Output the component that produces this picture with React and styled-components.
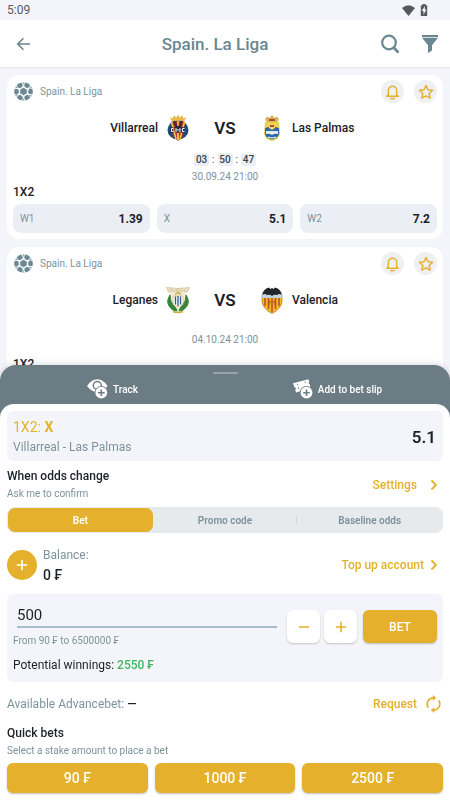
import React, { useState } from 'react';
import styled, { createGlobalStyle, css } from 'styled-components';

const colors = {
  page: '#f4f5fa',
  text: '#1c2127',
  muted: '#7d939c',
  slate: '#6b8791',
  gold: '#e5b02c',
  chip: '#ebeef4',
  sheet: '#6c7c84',
  green: '#3fb562',
};

const GlobalStyle = createGlobalStyle`
  * {
    box-sizing: border-box;
  }
  body {
    margin: 0;
    background: ${colors.page};
    color: ${colors.text};
    font-family: Roboto, "Liberation Sans", sans-serif;
    overflow: hidden;
  }
  button, input {
    font-family: inherit;
  }
  button {
    border: none;
    padding: 0;
    background: none;
    cursor: pointer;
  }
  svg {
    display: block;
    flex-shrink: 0;
  }
`;

const Screen = styled.div`
  height: 100vh;
  overflow: hidden;
`;

const StatusBar = styled.div`
  display: flex;
  align-items: center;
  justify-content: space-between;
  height: 20px;
  padding: 0 22px 0 7px;
  font-size: 12px;
  color: #55595e;
`;

const StatusIcons = styled.div`
  display: flex;
  align-items: center;
  gap: 5px;
`;

const Header = styled.header`
  display: grid;
  grid-template-columns: 48px 1fr 72px;
  align-items: center;
  height: 48px;
  padding: 0 10px 0 14px;
  background: #fff;
  border-bottom: 1px solid #e6e9ed;
`;

const HeaderTitle = styled.h1`
  margin: 0;
  font-size: 17px;
  font-weight: 500;
  line-height: 20px;
  text-align: center;
  color: ${colors.slate};
`;

const HeaderActions = styled.div`
  display: flex;
  align-items: center;
  justify-content: flex-end;
  gap: 20px;
`;

const IconButton = styled.button`
  display: flex;
  align-items: center;
  color: ${colors.slate};
`;

const MatchList = styled.main`
  display: flex;
  flex-direction: column;
  gap: 8px;
  padding: 7px;
`;

const Card = styled.article`
  padding: 5px 6px 6px;
  border-radius: 12px;
  background: #fff;
`;

const CardHead = styled.div`
  display: flex;
  align-items: center;
  gap: 7px;
  height: 23px;
  padding-left: 1px;
`;

const League = styled.span`
  flex: 1;
  font-size: 10px;
  color: ${colors.muted};
`;

const RoundButton = styled.button`
  display: flex;
  align-items: center;
  justify-content: center;
  width: 23px;
  height: 23px;
  margin-left: 3px;
  border-radius: 50%;
  background: #eff0f3;
`;

const Teams = styled.div`
  display: grid;
  grid-template-columns: 1fr 70px 1fr;
  align-items: center;
  height: 32px;
  margin-top: 9px;
`;

const Team = styled.div`
  display: flex;
  align-items: center;
  flex-direction: ${props => (props.$away ? 'row' : 'row-reverse')};
  gap: 8px;
  font-size: 12px;
  font-weight: 500;
`;

const Versus = styled.div`
  text-align: center;
  font-size: 17px;
  font-weight: 600;
`;

const Schedule = styled.div`
  display: flex;
  flex-direction: column;
  align-items: center;
  justify-content: center;
  gap: 5px;
  height: 32px;
  margin-top: 8px;
`;

const Timer = styled.div`
  display: flex;
  align-items: center;
  gap: 3px;
  font-size: 10px;
  line-height: 13px;
  color: #3b454e;
`;

const TimerCell = styled.span`
  width: 15px;
  border-radius: 3px;
  background: ${colors.chip};
  text-align: center;
  font-weight: 500;
`;

const DateText = styled.time`
  font-size: 10px;
  line-height: 12px;
  color: ${colors.muted};
`;

const MarketTitle = styled.h2`
  margin: 0;
  font-size: 12px;
  font-weight: 500;
  line-height: 16px;
`;

const Odds = styled.div`
  display: grid;
  grid-template-columns: repeat(3, 1fr);
  gap: 7px;
  margin-top: 4px;
`;

const OddButton = styled.button`
  display: flex;
  align-items: center;
  justify-content: space-between;
  height: 29px;
  padding: 0 7px;
  border-radius: 8px;
  background: ${colors.chip};
  color: ${colors.muted};
  font-size: 10px;

  strong {
    font-size: 12px;
    font-weight: 700;
    color: ${colors.text};
  }
`;

const Sheet = styled.section`
  position: fixed;
  left: 0;
  right: 0;
  bottom: 0;
  border-radius: 16px 16px 0 0;
  background: ${colors.sheet};
  box-shadow: 0 -1px 6px rgba(60, 70, 80, 0.2);
`;

const Handle = styled.div`
  width: 25px;
  height: 2px;
  margin: 0 auto;
  border-radius: 1px;
  background: #97a3a9;
`;

const SheetTop = styled.div`
  height: 39px;
  padding-top: 7px;
`;

const SheetActions = styled.div`
  display: grid;
  grid-template-columns: 1fr 1fr;
  height: 30px;
`;

const SheetAction = styled.button`
  display: flex;
  align-items: center;
  justify-content: center;
  gap: 5px;
  color: #fff;
  font-size: 10px;
  font-weight: 500;
`;

const Panel = styled.div`
  padding: 7px;
  border-radius: 14px 14px 0 0;
  background: #fff;
`;

const Row = styled.div`
  display: flex;
  align-items: center;
  justify-content: space-between;
`;

const Selection = styled(Row)`
  height: 50px;
  padding: 2px 7px 0 6px;
  border-radius: 6px;
  background: ${colors.page};
`;

const Pick = styled.div`
  font-size: 14px;
  line-height: 20px;
  color: ${colors.gold};

  b {
    font-weight: 700;
  }
`;

const MatchName = styled.div`
  font-size: 12px;
  line-height: 20px;
  color: ${colors.muted};
`;

const PickOdd = styled.div`
  font-size: 17px;
  font-weight: 600;
`;

const Label = styled.div`
  font-size: 12px;
  font-weight: 500;
  line-height: 17px;
`;

const Hint = styled.div`
  font-size: 10px;
  line-height: 17px;
  color: ${colors.muted};
`;

const LinkButton = styled.button`
  display: flex;
  align-items: center;
  gap: ${props => (props.$wide ? '13px' : '6px')};
  padding-right: 5px;
  color: ${colors.gold};
  font-size: 12px;
  font-weight: 500;
`;

const OddsChange = styled(Row)`
  height: 34px;
  margin-top: 7px;
`;

const Tabs = styled.div`
  display: grid;
  grid-template-columns: repeat(3, 1fr);
  height: 26px;
  margin-top: 5px;
  padding: 1px;
  border-radius: 8px;
  background: #e6eaed;
`;

const Tab = styled.button`
  border-radius: 7px;
  color: ${colors.muted};
  font-size: 10px;
  font-weight: 600;

  ${props =>
    props.$active &&
    css`
      background: ${colors.gold};
      color: #fff;
    `}
`;

const TabWithDivider = styled(Tab)`
  position: relative;

  &::after {
    content: '';
    position: absolute;
    top: 8px;
    right: 0;
    width: 1px;
    height: 8px;
    background: #d0d8dd;
  }
`;

const BalanceRow = styled(Row)`
  height: 40px;
  margin-top: 12px;
`;

const BalanceInfo = styled.div`
  display: flex;
  align-items: center;
  gap: 6px;
`;

const AddFunds = styled.button`
  display: flex;
  align-items: center;
  justify-content: center;
  width: 30px;
  height: 30px;
  border-radius: 50%;
  background: ${colors.gold};
`;

const BalanceLabel = styled.div`
  font-size: 12px;
  line-height: 19px;
  color: ${colors.muted};
`;

const BalanceValue = styled.div`
  font-size: 14px;
  font-weight: 500;
  line-height: 20px;
`;

const StakeBox = styled.div`
  margin-top: 9px;
  padding: 10px 6px 8px;
  border-radius: 6px;
  background: ${colors.page};
`;

const StakeRow = styled.div`
  display: flex;
  gap: 4px;
  height: 40px;
`;

const StakeField = styled.div`
  flex: 1;
  min-width: 0;
  margin-right: 6px;
`;

const StakeInput = styled.input`
  display: block;
  width: calc(100% - 4px);
  height: 24px;
  margin-left: 4px;
  padding: 0;
  border: none;
  border-bottom: 2px solid #a9bccb;
  border-radius: 0;
  outline: none;
  background: transparent;
  color: ${colors.text};
  font-size: 15px;
`;

const StakeHint = styled.label`
  display: block;
  margin-top: 6px;
  font-size: 10px;
  line-height: 14px;
  color: ${colors.muted};
`;

const StepButton = styled.button`
  display: flex;
  align-items: center;
  justify-content: center;
  width: 33px;
  height: 33px;
  margin-top: 6px;
  border-radius: 6px;
  background: #fff;
  box-shadow: 0 1px 2px rgba(0, 0, 0, 0.2);
`;

const BetButton = styled.button`
  width: 74px;
  height: 33px;
  margin: 6px 0 0 2px;
  border-radius: 6px;
  background: ${colors.gold};
  box-shadow: 0 1px 2px rgba(0, 0, 0, 0.25);
  color: #fff;
  font-size: 12px;
  font-weight: 500;
`;

const Winnings = styled.div`
  margin-top: 12px;
  font-size: 12px;
  line-height: 18px;

  span {
    font-weight: 500;
    color: ${colors.green};
  }
`;

const AdvanceRow = styled(Row)`
  height: 24px;
  margin-top: 10px;
  font-size: 12px;
  color: ${colors.muted};

  b {
    color: ${colors.text};
    font-weight: 500;
  }
`;

const RequestButton = styled(LinkButton)`
  gap: 8px;
  padding-right: 1px;
`;

const QuickBets = styled.div`
  margin-top: 9px;
`;

const QuickGrid = styled.div`
  display: grid;
  grid-template-columns: repeat(3, 1fr);
  gap: 7px;
  margin-top: 4px;
`;

const QuickButton = styled.button`
  height: 30px;
  border-radius: 6px;
  background: ${colors.gold};
  box-shadow: 0 1px 2px rgba(0, 0, 0, 0.25);
  color: #fff;
  font-size: 14px;
  font-weight: 500;
`;

const BallIcon = () => (
  <svg width="19" height="19" viewBox="0 0 38 38" fill={colors.slate}>
    <path d="M19 12l6.200 3.500v7L19 26l-6.200-3.500v-7z" stroke={colors.slate} strokeWidth="1" />
    {[30, 90, 150, 210, 270, 330].map(angle => (
      <g key={angle} transform={`rotate(${angle} 19 19)`}>
        <path d="M13.500 1.300a18.500 18.500 0 0 1 11 0l-.5 5.700-2 2.500h-6l-2-2.500z" />
        <path d="M26.500 2.200a18.500 18.500 0 0 1 3.500 2.200l-3 4-1.500-1z" opacity="0.7" />
      </g>
    ))}
  </svg>
);

const BellIcon = () => (
  <svg width="15" height="16" viewBox="0 0 15 16" fill="none" stroke={colors.gold} strokeWidth="1.400" strokeLinecap="round" strokeLinejoin="round">
    <path d="M3.300 11V6.500a4.200 4.200 0 0 1 8.400 0V11l1.500 1.300H1.800z" />
    <path d="M5.800 14.400q1.700 1 3.400 0" />
  </svg>
);

const StarIcon = () => (
  <svg width="16" height="16" viewBox="0 0 16 16" fill="none" stroke={colors.gold} strokeWidth="1.500" strokeLinejoin="round">
    <path d="M8 1.500l2 4.200 4.600.6-3.400 3.200.9 4.700L8 11.900l-4.100 2.300.9-4.700L1.400 6.300 6 5.700z" />
  </svg>
);

const ChevronIcon = () => (
  <svg width="8" height="12" viewBox="0 0 8 12" fill="none" stroke={colors.gold} strokeWidth="1.800">
    <path d="M1.500 1.500L6 6l-4.500 4.500" />
  </svg>
);

const PlusIcon = ({ color = colors.gold, size = 12 }) => (
  <svg width={size} height={size} viewBox="0 0 12 12" stroke={color} strokeWidth="1.600">
    <path d="M6 .8v10.400M.8 6h10.400" />
  </svg>
);

const MinusIcon = () => (
  <svg width="12" height="12" viewBox="0 0 12 12" stroke={colors.gold} strokeWidth="1.600">
    <path d="M1 6h10" />
  </svg>
);

const RefreshIcon = () => (
  <svg width="17" height="18" viewBox="0 0 17 18" fill="none" stroke={colors.gold} strokeWidth="1.600">
    <path d="M3.200 12.600A6.300 6.300 0 0 1 8.500 2.900" />
    <path d="M13.800 5.400A6.300 6.300 0 0 1 8.500 15.100" />
    <path d="M7.800.1l3.400 2.800-3.400 2.800zM9.200 12.300l-3.400 2.800 3.400 2.800z" fill={colors.gold} stroke="none" />
  </svg>
);

const TrackIcon = () => (
  <svg width="21" height="20" viewBox="0 0 21 20">
    <path d="M0 7Q4.500.300 10.300.300T20.600 7Q16 13 10.300 13T0 7z" fill="#fff" />
    <circle cx="10.300" cy="6.500" r="4" fill="none" stroke={colors.sheet} strokeWidth="1.500" />
    <circle cx="14.300" cy="13.700" r="6.800" fill={colors.sheet} />
    <circle cx="14.300" cy="13.700" r="5.900" fill="#fff" />
    <path d="M14.300 10.400V17M11 13.700h6.600" stroke={colors.sheet} strokeWidth="1.600" />
  </svg>
);

const SlipIcon = () => (
  <svg width="20" height="20" viewBox="0 0 20 20">
    <path d="M0 4.200L15.500.300l.8 3-1.200 1 1.500.8.9 4.200L3 13.500l-.8-3 1.400-1.200-2-.8z" fill="#fff" />
    <path d="M4.500 4.800l.4 1.500M5.500 8.500l.4 1.500M12 2.800l.3 1.200" stroke={colors.sheet} strokeWidth="1" />
    <circle cx="13.500" cy="13.700" r="6.800" fill={colors.sheet} />
    <circle cx="13.500" cy="13.700" r="5.900" fill="#fff" />
    <path d="M13.500 10.400V17M10.200 13.700h6.600" stroke={colors.sheet} strokeWidth="1.600" />
  </svg>
);

const VillarrealCrest = () => (
  <svg width="24" height="28" viewBox="0 0 24 28">
    <path d="M6 7L3.500 3.500l3 .8L8 1.500l2.300 2L12 .8l1.700 2.700 2.300-2 1.500 2.800 3-.8L18 7z" fill="#e9b949" />
    <ellipse cx="12" cy="16" rx="10.500" ry="9.500" fill="#234a7c" />
    <path d="M5 7.500h14L17 22l-5 5-5-5z" fill="#b5342c" />
    <path d="M5.500 8l4.500 17M18.500 8L14 25M12 6v6" stroke="#f3c84b" strokeWidth="1.500" />
    <path d="M8 7l4 8 4-8" fill="none" stroke="#1d2842" strokeWidth="1.600" />
    <path d="M7.500 14.500h-2v3h2M10 18v-3.500l2 2 2-2V18M18.500 14.500h-2v3h2" fill="none" stroke="#1d2842" strokeWidth="2.400" />
    <path d="M7.500 14.500h-2v3h2M10 18v-3.500l2 2 2-2V18M18.500 14.500h-2v3h2" fill="none" stroke="#fff" strokeWidth="1" />
    <path d="M12 19v7" stroke="#e9b949" strokeWidth="2" />
  </svg>
);

const LasPalmasCrest = () => (
  <svg width="24" height="28" viewBox="0 0 24 28">
    <path d="M7 8Q3.500 5 7 3l3 .5L12 .8l2 2.700 3-.5q3.500 2 0 5z" fill="#d6b354" />
    <path d="M9 5h6v2H9z" fill="#a84a36" />
    <path d="M5 8h14l1 12q-2 6-8 7-6-1-8-7z" fill="#ecd24b" />
    <path d="M5 14q7-3 14 0v6q-1 4-7 5.500Q6 24 5 20z" fill="#2c68a8" />
    <path d="M9 14v-4h6v4l-3 2z" fill="#f0d65a" />
    <path d="M10 11h4v2h-4z" fill="#b44839" />
    <path d="M6 17h12v3q-3-1-6 1-3-2-6-1z" fill="#e4ecf4" />
    <path d="M8 23q4 2 8 0" fill="none" stroke="#fff" strokeWidth="1" />
  </svg>
);

const LeganesCrest = () => (
  <svg width="24" height="28" viewBox="0 0 24 28">
    <path d="M.7 1.500q11.300 2 22.600 0L21.500 6h-19z" fill="#ebe0c4" stroke="#ceb98b" strokeWidth=".7" />
    <path d="M4 4h16" stroke="#c9b58c" strokeWidth="1" strokeDasharray="1 1" />
    <path d="M3.500 6.500h17L22 17q-1 8-10 10Q3 25 2 17z" fill="#f4ecd8" />
    <path d="M4 9q-4 6-1 11 3 5 8 5-1-4-4-6-3-4-3-10zM20 9q4 6 1 11-3 5-8 5 1-4 4-6 3-4 3-10z" fill="#36853b" stroke="#36853b" />
    <path d="M7 10h10v7q-1 3-5 4-4-1-5-4z" fill="#fff" stroke="#d4ba68" strokeWidth=".7" />
    <path d="M9.500 10.500v8M12 10v10M14.500 10.500v8" stroke="#285a92" strokeWidth="1.300" />
    <path d="M9 8.500l3-2 3 2M7 25.500q5 2 10 0" fill="none" stroke="#c9a943" strokeWidth="1.500" />
  </svg>
);

const ValenciaCrest = () => (
  <svg width="24" height="28" viewBox="0 0 24 28">
    <path d="M2 9h20v7q-1 7-10 11.500Q3 23 2 16z" fill="#f0b929" stroke="#9e6525" strokeWidth=".6" />
    <path d="M5 11v9M8.500 11v12M12 11v15M15.500 11v12M19 11v9" stroke="#c14b25" strokeWidth="1.500" />
    <path d="M2 8.500q3-2 10 0 7-2 10 0v3.500H2z" fill="#bfd2df" />
    <path d="M2 9Q3 3 9 1.500L10.500 3 12 2l1.500 1L15 1.500Q21 3 22 9q-3-2-5 0-3-1-5 1-2-2-5-1-2-2-5 0z" fill="#22262b" />
    <path d="M9.500 19v-4l2.500 2 2.500-2v4" fill="none" stroke="#b77a20" strokeWidth="1.300" />
  </svg>
);

const matches = [
  {
    home: 'Villarreal',
    away: 'Las Palmas',
    homeCrest: <VillarrealCrest />,
    awayCrest: <LasPalmasCrest />,
    timer: ['03', '50', '47'],
    date: '30.09.24 21:00',
    odds: [['W1', '1.39'], ['X', '5.1'], ['W2', '7.2']],
  },
  {
    home: 'Leganes',
    away: 'Valencia',
    homeCrest: <LeganesCrest />,
    awayCrest: <ValenciaCrest />,
    date: '04.10.24 21:00',
    odds: [],
  },
];

function MatchCard({ match }) {
  return (
    <Card>
      <CardHead>
        <BallIcon />
        <League>Spain. La Liga</League>
        <RoundButton aria-label="Notifications"><BellIcon /></RoundButton>
        <RoundButton aria-label="Favorite"><StarIcon /></RoundButton>
      </CardHead>
      <Teams>
        <Team>{match.homeCrest}{match.home}</Team>
        <Versus>VS</Versus>
        <Team $away>{match.awayCrest}{match.away}</Team>
      </Teams>
      <Schedule>
        {match.timer && (
          <Timer>
            <TimerCell>{match.timer[0]}</TimerCell>:
            <TimerCell>{match.timer[1]}</TimerCell>:
            <TimerCell>{match.timer[2]}</TimerCell>
          </Timer>
        )}
        <DateText>{match.date}</DateText>
      </Schedule>
      <MarketTitle>1X2</MarketTitle>
      <Odds>
        {match.odds.map(([name, value]) => (
          <OddButton key={name}>{name}<strong>{value}</strong></OddButton>
        ))}
      </Odds>
    </Card>
  );
}

function BetSheet() {
  const [tab, setTab] = useState('Bet');
  const [stake, setStake] = useState(500);

  return (
    <Sheet>
      <SheetTop>
        <Handle />
        <SheetActions>
          <SheetAction><TrackIcon />Track</SheetAction>
          <SheetAction><SlipIcon />Add to bet slip</SheetAction>
        </SheetActions>
      </SheetTop>
      <Panel>
        <Selection>
          <div>
            <Pick>1X2: <b>X</b></Pick>
            <MatchName>Villarreal - Las Palmas</MatchName>
          </div>
          <PickOdd>5.1</PickOdd>
        </Selection>
        <OddsChange>
          <div>
            <Label>When odds change</Label>
            <Hint>Ask me to confirm</Hint>
          </div>
          <LinkButton $wide>Settings<ChevronIcon /></LinkButton>
        </OddsChange>
        <Tabs>
          <Tab $active={tab === 'Bet'} onClick={() => setTab('Bet')}>Bet</Tab>
          <TabWithDivider $active={tab === 'Promo'} onClick={() => setTab('Promo')}>Promo code</TabWithDivider>
          <Tab $active={tab === 'Baseline'} onClick={() => setTab('Baseline')}>Baseline odds</Tab>
        </Tabs>
        <BalanceRow>
          <BalanceInfo>
            <AddFunds aria-label="Add funds"><PlusIcon color="#fff" /></AddFunds>
            <div>
              <BalanceLabel>Balance:</BalanceLabel>
              <BalanceValue>0 ₣</BalanceValue>
            </div>
          </BalanceInfo>
          <LinkButton>Top up account<ChevronIcon /></LinkButton>
        </BalanceRow>
        <StakeBox>
          <StakeRow>
            <StakeField>
              <StakeInput id="stake" inputMode="numeric" value={stake} onChange={e => setStake(Number(e.target.value) || 0)} />
              <StakeHint htmlFor="stake">From 90 ₣ to 6500000 ₣</StakeHint>
            </StakeField>
            <StepButton aria-label="Decrease stake" onClick={() => setStake(stake - 10)}><MinusIcon /></StepButton>
            <StepButton aria-label="Increase stake" onClick={() => setStake(stake + 10)}><PlusIcon /></StepButton>
            <BetButton>BET</BetButton>
          </StakeRow>
          <Winnings>Potential winnings: <span>{Math.round(stake * 5.1)} ₣</span></Winnings>
        </StakeBox>
        <AdvanceRow>
          <div>Available Advancebet: <b>—</b></div>
          <RequestButton>Request<RefreshIcon /></RequestButton>
        </AdvanceRow>
        <QuickBets>
          <Label>Quick bets</Label>
          <Hint>Select a stake amount to place a bet</Hint>
          <QuickGrid>
            {[90, 1000, 2500].map(amount => (
              <QuickButton key={amount} onClick={() => setStake(amount)}>{amount} ₣</QuickButton>
            ))}
          </QuickGrid>
        </QuickBets>
      </Panel>
    </Sheet>
  );
}

function App() {
  return (
    <Screen>
      <GlobalStyle />
      <StatusBar>
        5:09
        <StatusIcons>
          <svg width="13" height="11" viewBox="0 0 13 11" fill="#55595e">
            <path d="M0 3Q6.500-2.500 13 3L6.500 11z" />
          </svg>
          <svg width="8" height="12" viewBox="0 0 8 12" fill="#55595e">
            <path d="M2.500 0h3v1.200h1.700V12H.8V1.200h1.700z" />
            <path d="M4.800 2L1.800 7h1.700v3.800L6.400 5.600H4.800z" fill="#f4f5fa" />
          </svg>
        </StatusIcons>
      </StatusBar>
      <Header>
        <IconButton aria-label="Back">
          <svg width="18" height="16" viewBox="0 0 18 16" fill="none" stroke={colors.slate} strokeWidth="1.600">
            <path d="M16 8H4M9.500 2.200L3.700 8l5.800 5.800" />
          </svg>
        </IconButton>
        <HeaderTitle>Spain. La Liga</HeaderTitle>
        <HeaderActions>
          <IconButton aria-label="Search">
            <svg width="20" height="20" viewBox="0 0 20 20" fill="none" stroke={colors.slate} strokeWidth="2.200">
              <circle cx="9" cy="8.500" r="6.800" />
              <path d="M13.500 13.500l5 5" strokeWidth="2.600" />
            </svg>
          </IconButton>
          <IconButton aria-label="Filter">
            <svg width="20" height="20" viewBox="0 0 20 20" fill={colors.slate}>
              <path d="M2 1h16v2.200H2zM2.200 4h15.600L12 11.200v5.300L8 19v-7.800z" />
            </svg>
          </IconButton>
        </HeaderActions>
      </Header>
      <MatchList>
        {matches.map(match => (
          <MatchCard key={match.home} match={match} />
        ))}
      </MatchList>
      <BetSheet />
    </Screen>
  );
}

export default App;
